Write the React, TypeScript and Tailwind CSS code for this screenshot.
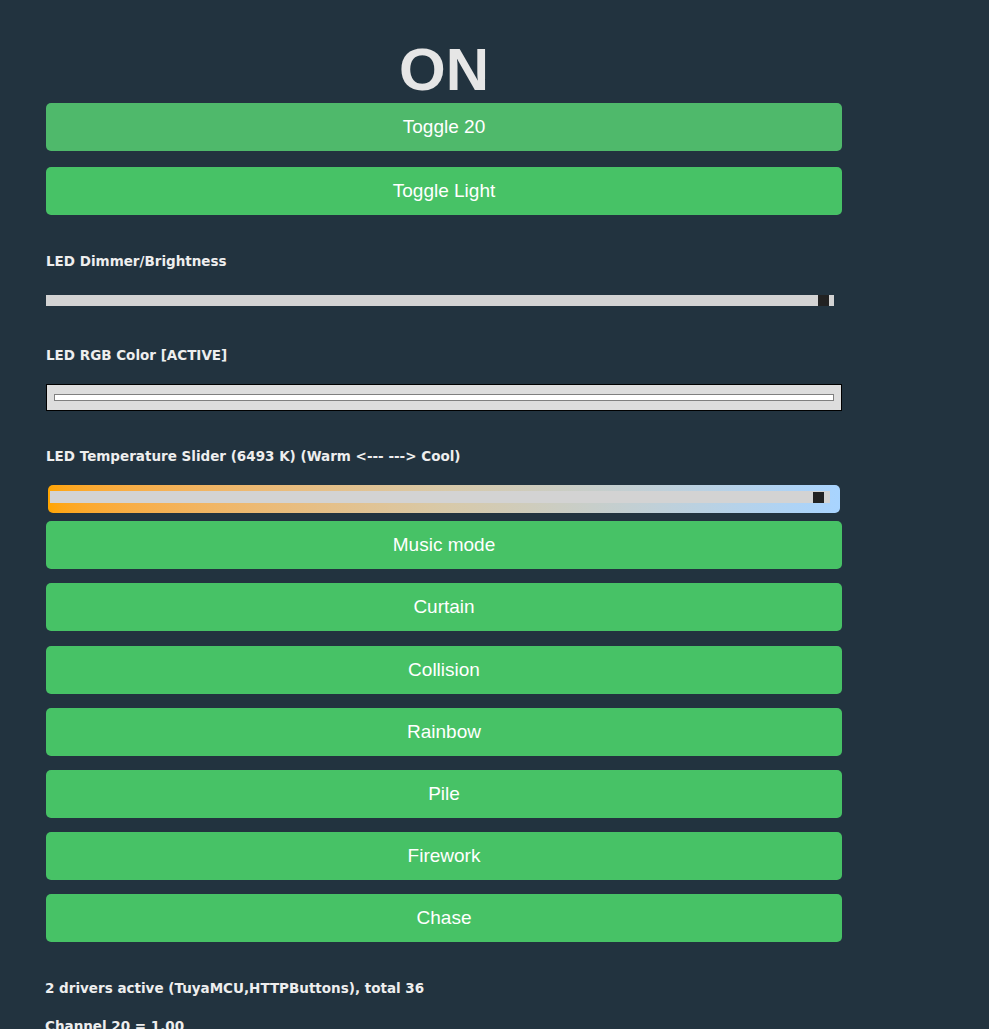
const label = "font-['DejaVu_Sans',Verdana,sans-serif] font-bold text-[13.5px] leading-4 text-[#eeeeee]";
const btn = "h-12 w-full rounded-[5px] flex items-center justify-center text-white text-[19px] font-['Liberation_Sans',Arial,sans-serif]";

const effects = ['Curtain', 'Collision', 'Rainbow', 'Pile', 'Firework', 'Chase'];

export default function App() {
  return (
    <div className="min-h-[1029px] bg-[#22333f] overflow-hidden">
      <div className="w-[796px] ml-[46px] flex flex-col">
        <h1 className="mt-10 mb-[3px] text-center text-[60px] leading-[60px] font-bold text-[#e6e6e6] font-['Liberation_Sans',Arial,sans-serif]">
          ON
        </h1>
        <div className={btn + ' bg-[#4fb96b]'}>Toggle 20</div>
        <div className={btn + ' bg-[#47c266] mt-4'}>Toggle Light</div>

        <div className={label + ' mt-[38px]'}>LED Dimmer/Brightness</div>
        <div className="mt-[26px] flex h-[11px] w-[788px] bg-[#d3d3d3] relative">
          <span className="absolute left-[772px] top-0 h-[11px] w-[11px] bg-[#222222]" />
        </div>

        <div className={label + ' mt-[41px]'}>LED RGB Color [ACTIVE]</div>
        <div className="mt-[21px] h-[27px] border border-black bg-[#dddddd] px-[7px] pt-[9px]">
          <div className="h-[7px] border border-[#808080] bg-white" />
        </div>

        <div className={label + ' mt-[37px]'}>LED Temperature Slider (6493 K) (Warm &lt;--- ---&gt; Cool)</div>
        <div className="mt-[21px] mx-[2px] h-7 rounded-[5px] bg-gradient-to-r from-[#ffa500] via-[#d8c9a8] to-[#a8d4ff] pl-[2px] pr-[10px] pt-[6px]">
          <div className="relative h-3 bg-[#d3d3d3]">
            <span className="absolute left-[763px] top-[1px] h-[11px] w-[11px] bg-[#222222]" />
          </div>
        </div>

        <div className={btn + ' bg-[#47c266] mt-2'}>Music mode</div>
        {effects.map((e, i) => (
          <div key={e} className={btn + ' bg-[#47c266] ' + (i === 1 ? 'mt-[15px]' : 'mt-[14px]')}>
            {e}
          </div>
        ))}

        <div className={label + ' -ml-px mt-[38px]'}>2 drivers active (TuyaMCU,HTTPButtons), total 36</div>
        <div className={label + ' -ml-px mt-[22px]'}>Channel 20 = 1.00</div>
      </div>
    </div>
  );
}
